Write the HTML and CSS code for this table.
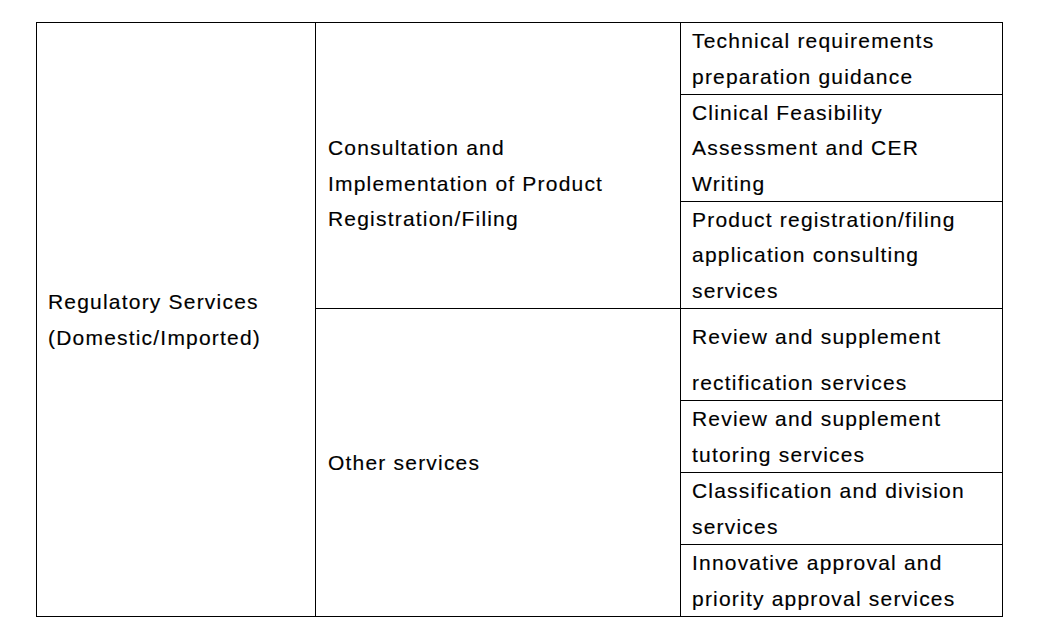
FILE: index.html
```html
<!DOCTYPE html>
<html lang="en">
<head>
<meta charset="utf-8">
<title>Regulatory Services</title>
<link rel="stylesheet" href="styles.css">
</head>
<body>
<table class="svc">
  <colgroup>
    <col class="c1"><col class="c2"><col class="c3">
  </colgroup>
  <tbody>
    <tr class="r1">
      <td rowspan="7" class="cat">Regulatory Services<br>(Domestic/Imported)</td>
      <td rowspan="3" class="grp grp-top">Consultation and<br>Implementation of Product<br>Registration/Filing</td>
      <td class="item">Technical requirements<br>preparation guidance</td>
    </tr>
    <tr class="r3l"><td class="item">Clinical Feasibility<br>Assessment and CER<br>Writing</td></tr>
    <tr class="r3l"><td class="item">Product registration/filing<br>application consulting<br>services</td></tr>
    <tr class="r4">
      <td rowspan="4" class="grp">Other services</td>
      <td class="item wide"><span class="ln">Review and supplement</span><span class="ln">rectification services</span></td>
    </tr>
    <tr class="r2l"><td class="item">Review and supplement<br>tutoring services</td></tr>
    <tr class="r2l"><td class="item">Classification and division<br>services</td></tr>
    <tr class="r2l"><td class="item">Innovative approval and<br>priority approval services</td></tr>
  </tbody>
</table>
</body>
</html>
```
FILE: styles.css
```css
html, body {
  margin: 0;
  padding: 0;
  background: #ffffff;
}
body {
  padding: 22px 0 0 36px;
  font-family: "Liberation Sans", Arial, sans-serif;
  font-size: 21px;
  letter-spacing: 1.2px;
  color: #000000;
  -webkit-text-stroke: 0.15px #000000;
}
.svc {
  border-collapse: collapse;
  table-layout: fixed;
  width: 967px;
}
.c1 { width: 279px; }
.c2 { width: 365px; }
.c3 { width: 322px; }
.svc td {
  border: 1px solid #000000;
  padding: 0 11px;
  line-height: 35.5px;
  vertical-align: middle;
  white-space: nowrap;
}
.svc td.grp { padding-left: 12px; }
.r1 td.item, .r2l td { height: 71px; }
.r3l td { height: 106px; line-height: 35.3px; }
.r4 td.item { height: 91px; }
.grp-top { padding-top: 36px !important; }
.item.wide { vertical-align: top; }
.ln {
  display: block;
  line-height: 36px;
  margin-top: 10px;
}
.ln + .ln { line-height: 35px; }
```
